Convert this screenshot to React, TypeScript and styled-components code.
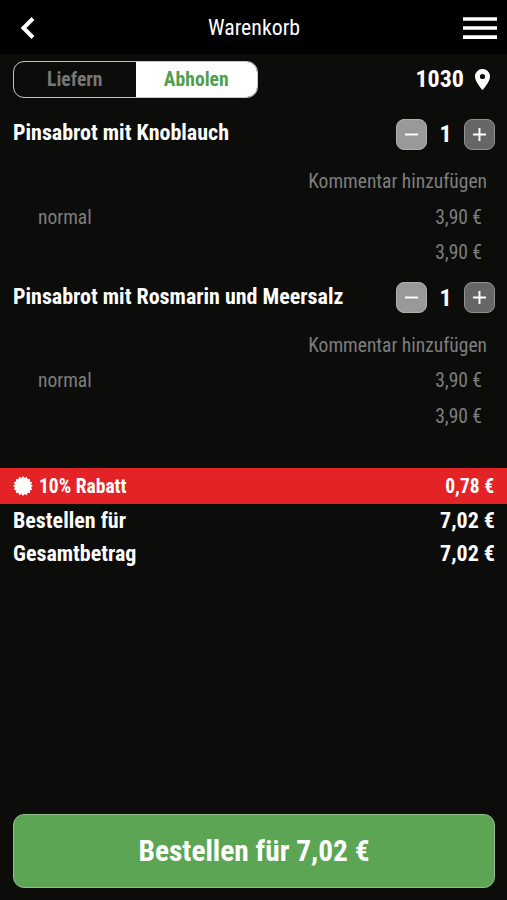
import React from "react";
import styled, { createGlobalStyle } from "styled-components";

const Global = createGlobalStyle`
  * { box-sizing: border-box; }
  body { margin: 0; background: #0c0c0b; }
  button { border: 0; padding: 0; background: none; font: inherit; color: inherit; }
`;

const Screen = styled.div`
  width: 507px;
  height: 900px;
  display: flex;
  flex-direction: column;
  background: #0c0c0b;
  color: #fff;
  font-family: "Roboto Condensed", Roboto, sans-serif;
  font-stretch: 75%;
  overflow: hidden;
`;

const Text = styled.span<{ $size: number; $bold?: boolean; $color?: string; $drop?: number }>`
  display: block;
  white-space: nowrap;
  padding-top: ${(p) => p.$drop ?? 0}px;
  font-size: ${(p) => p.$size}px;
  font-weight: ${(p) => (p.$bold ? 700 : 430)};
  line-height: 30px;
  color: ${(p) => p.$color ?? "#fff"};
`;

const Header = styled.header`
  height: 54px;
  flex: none;
  padding: 2px 10px 0 20px;
  background: #000;
  display: grid;
  grid-template-columns: 34px 1fr 34px;
  align-items: center;
  justify-items: start;
  svg { display: block; }
`;

const Title = styled.div`
  justify-self: center;
  padding-right: 9px;
`;

const Bar = styled.div`
  height: 50px;
  flex: none;
  padding: 0 17px 0 13px;
  display: flex;
  align-items: center;
  justify-content: space-between;
`;

const Toggle = styled.div`
  width: 245px;
  height: 37px;
  display: flex;
  border: 1px solid #c4c4c4;
  border-radius: 11px;
  overflow: hidden;
`;

const Option = styled.button<{ $active?: boolean }>`
  flex: 1;
  display: flex;
  align-items: center;
  justify-content: center;
  background: ${(p) => (p.$active ? "#fff" : "transparent")};
`;

const Place = styled.div`
  display: flex;
  align-items: center;
  gap: 11px;
`;

const Item = styled.section`
  height: 163.5px;
  flex: none;
`;

const ItemHead = styled.div`
  height: 60px;
  padding: 0 12px 0 13px;
  display: flex;
  align-items: center;
  justify-content: space-between;
`;

const Name = styled.div`
  padding-bottom: 2px;
`;

const Stepper = styled.div`
  width: 99px;
  display: flex;
  align-items: center;
  justify-content: space-between;
`;

const Step = styled.button<{ $dim?: boolean }>`
  width: 31px;
  height: 31px;
  border: 1px solid ${(p) => (p.$dim ? "#b0b0b0" : "#929292")};
  border-radius: 8px;
  background: ${(p) => (p.$dim ? "#999" : "#666")};
  display: grid;
  place-items: center;
`;

const Comment = styled.div`
  height: 35px;
  padding: 1px 20px 0 0;
  display: flex;
  justify-content: flex-end;
  align-items: center;
`;

const Line = styled.div`
  height: 35.5px;
  padding: 2px 25px 0 38px;
  display: flex;
  justify-content: space-between;
  align-items: center;
`;

const Discount = styled.div`
  margin-top: 37px;
  height: 36px;
  flex: none;
  padding: 0 13px;
  background: #e32325;
  display: flex;
  align-items: center;
  justify-content: space-between;
`;

const Badge = styled.div`
  display: flex;
  align-items: center;
  gap: 6px;
`;

const Total = styled.div`
  height: 33px;
  flex: none;
  padding: 0 12px 0 13px;
  display: flex;
  align-items: center;
  justify-content: space-between;
`;

const Order = styled.button`
  && {
    margin: auto 12px 12px 13px;
    height: 74px;
    flex: none;
    border: 1px solid #93bd8d;
    border-radius: 11px;
    background: #5ba554;
    display: flex;
    align-items: center;
    justify-content: center;
  }
`;

const burst = Array.from({ length: 32 }, (_, i) => {
  const a = (i * Math.PI) / 16;
  const r = i % 2 ? 8.2 : 9.9;
  return `${10 + r * Math.cos(a)},${10 + r * Math.sin(a)}`;
}).join(" ");

const grey = "#7e7e7d";
const items = ["Pinsabrot mit Knoblauch", "Pinsabrot mit Rosmarin und Meersalz"];

export default function App() {
  return (
    <>
      <Global />
      <Screen>
        <Header>
          <svg width="15" height="22" viewBox="0 0 15 22">
            <path d="M13 1.500 3.500 11l9.500 9.500" fill="none" stroke="#fff" strokeWidth="4" />
          </svg>
          <Title><Text $size={21.800}>Warenkorb</Text></Title>
          <svg width="34" height="24" viewBox="0 0 34 24">
            <path d="M0 3h34M0 12h34M0 21.200h34" stroke="#fff" strokeWidth="3.700" />
          </svg>
        </Header>
        <Bar>
          <Toggle>
            <Option><Text $size={19.600} $drop={2} $bold $color="#777">Liefern</Text></Option>
            <Option $active><Text $size={19.600} $drop={2} $bold $color="#519f4c">Abholen</Text></Option>
          </Toggle>
          <Place>
            <Text $size={24} $bold>1030</Text>
            <svg width="15" height="21" viewBox="0 0 15 21">
              <path fill="#fff" fillRule="evenodd" d="M7.500 0A7.400 7.400 0 0 0 0 7.500C0 13 7.500 21 7.500 21S15 13 15 7.500A7.400 7.400 0 0 0 7.500 0Zm0 4.900a2.600 2.600 0 1 1 0 5.200 2.600 2.600 0 0 1 0-5.200Z" />
            </svg>
          </Place>
        </Bar>
        {items.map((name) => (
          <Item key={name}>
            <ItemHead>
              <Name><Text $size={22} $bold>{name}</Text></Name>
              <Stepper>
                <Step $dim><svg width="15" height="15"><path d="M1 7.500h13" stroke="#fff" strokeWidth="1.900" /></svg></Step>
                <Text $size={24} $bold>1</Text>
                <Step><svg width="15" height="15"><path d="M1 7.500h13M7.500 1v13" stroke="#fff" strokeWidth="1.900" /></svg></Step>
              </Stepper>
            </ItemHead>
            <Comment><Text $size={19.500} $color={grey}>Kommentar hinzufügen</Text></Comment>
            <Line>
              <Text $size={19.500} $color={grey}>normal</Text>
              <Text $size={19.500} $color={grey}>3,90 €</Text>
            </Line>
            <Line>
              <span />
              <Text $size={19.500} $color={grey}>3,90 €</Text>
            </Line>
          </Item>
        ))}
        <Discount>
          <Badge>
            <svg width="20" height="20"><polygon points={burst} fill="#fff" /></svg>
            <Text $size={19.550} $drop={2} $bold>10% Rabatt</Text>
          </Badge>
          <Text $size={19.550} $drop={2} $bold>0,78 €</Text>
        </Discount>
        <Total>
          <Text $size={22} $bold>Bestellen für</Text>
          <Text $size={22} $bold>7,02 €</Text>
        </Total>
        <Total>
          <Text $size={22} $bold>Gesamtbetrag</Text>
          <Text $size={22} $bold>7,02 €</Text>
        </Total>
        <Order><Text $size={29.400} $bold>Bestellen für 7,02 €</Text></Order>
      </Screen>
    </>
  );
}
